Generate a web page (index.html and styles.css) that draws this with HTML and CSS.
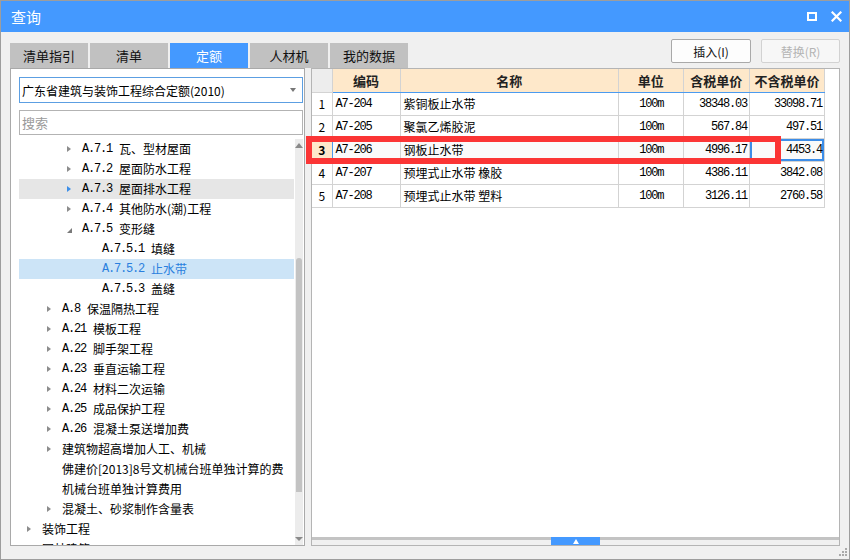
FILE: index.html
```html
<!DOCTYPE html>
<html lang="zh">
<head>
<meta charset="utf-8">
<title>查询</title>
<link rel="stylesheet" href="styles.css">
</head>
<body>
<div class="window">
  <div class="titlebar">
    <span class="title">查询</span>
    <div class="win-btns">
      <svg class="maxbtn" width="10" height="10" viewBox="0 0 10 10"><rect x="1" y="1" width="8" height="7" fill="none" stroke="#fff" stroke-width="2"/></svg>
      <svg class="closebtn" width="11" height="11" viewBox="0 0 11 11"><path d="M1.5 1.5 L9.5 9.5 M9.5 1.5 L1.5 9.5" stroke="#fff" stroke-width="2.2" stroke-linecap="square"/></svg>
    </div>
  </div>

  <div class="toolbar">
    <div class="tabs">
      <div class="tab">清单指引</div>
      <div class="tab">清单</div>
      <div class="tab active">定额</div>
      <div class="tab">人材机</div>
      <div class="tab">我的数据</div>
    </div>
    <div class="actions">
      <button class="btn">插入(I)</button>
      <button class="btn disabled">替换(R)</button>
    </div>
  </div>

  <div class="main">
    <div class="left">
      <div class="combo"><span>广东省建筑与装饰工程综合定额(2010)</span><span class="combo-arrow"></span></div>
      <div class="search">搜索</div>
      <div class="tree">
        <div class="tree-body">
          <div class="node l2"><span class="arr"></span><span class="code">A.7.1</span>瓦、型材屋面</div>
          <div class="node l2"><span class="arr"></span><span class="code">A.7.2</span>屋面防水工程</div>
          <div class="node l2 hover"><span class="arr"></span><span class="code">A.7.3</span>屋面排水工程</div>
          <div class="node l2"><span class="arr"></span><span class="code">A.7.4</span>其他防水(潮)工程</div>
          <div class="node l2"><span class="arr open"></span><span class="code">A.7.5</span>变形缝</div>
          <div class="node l3"><span class="arr none"></span><span class="code">A.7.5.1</span>填缝</div>
          <div class="node l3 selected"><span class="arr none"></span><span class="code">A.7.5.2</span>止水带</div>
          <div class="node l3"><span class="arr none"></span><span class="code">A.7.5.3</span>盖缝</div>
          <div class="node l1"><span class="arr"></span><span class="code">A.8</span>保温隔热工程</div>
          <div class="node l1"><span class="arr"></span><span class="code">A.21</span>模板工程</div>
          <div class="node l1"><span class="arr"></span><span class="code">A.22</span>脚手架工程</div>
          <div class="node l1"><span class="arr"></span><span class="code">A.23</span>垂直运输工程</div>
          <div class="node l1"><span class="arr"></span><span class="code">A.24</span>材料二次运输</div>
          <div class="node l1"><span class="arr"></span><span class="code">A.25</span>成品保护工程</div>
          <div class="node l1"><span class="arr"></span><span class="code">A.26</span>混凝土泵送增加费</div>
          <div class="node l1"><span class="arr"></span>建筑物超高增加人工、机械</div>
          <div class="node l1"><span class="arr none"></span>佛建价[2013]8号文机械台班单独计算的费</div>
          <div class="node l1"><span class="arr none"></span>机械台班单独计算费用</div>
          <div class="node l1"><span class="arr"></span>混凝土、砂浆制作含量表</div>
          <div class="node l0"><span class="arr"></span>装饰工程</div>
          <div class="node l0"><span class="arr"></span>园林建筑</div>
        </div>
        <div class="vscroll">
          <span class="sc-up"></span>
          <span class="sc-thumb"></span>
          <span class="sc-down"></span>
        </div>
      </div>
    </div>

    <div class="right">
      <div class="grid-area">
        <table class="grid">
          <colgroup>
            <col class="c-num"><col class="c-code"><col class="c-name"><col class="c-unit"><col class="c-p1"><col class="c-p2">
          </colgroup>
          <thead>
            <tr><th class="num"></th><th>编码</th><th>名称</th><th>单位</th><th>含税单价</th><th>不含税单价</th></tr>
          </thead>
          <tbody>
            <tr><td class="num">1</td><td class="mono">A7-204</td><td>紫铜板止水带</td><td class="unit mono">100m</td><td class="price mono">38348.03</td><td class="price mono">33098.71</td></tr>
            <tr><td class="num">2</td><td class="mono">A7-205</td><td>聚氯乙烯胶泥</td><td class="unit mono">100m</td><td class="price mono">567.84</td><td class="price mono">497.51</td></tr>
            <tr class="cur"><td class="num">3</td><td class="mono">A7-206</td><td>钢板止水带</td><td class="unit mono">100m</td><td class="price mono">4996.17</td><td class="price mono focus">4453.4</td></tr>
            <tr><td class="num">4</td><td class="mono">A7-207</td><td>预埋式止水带 橡胶</td><td class="unit mono">100m</td><td class="price mono">4386.11</td><td class="price mono">3842.08</td></tr>
            <tr><td class="num">5</td><td class="mono">A7-208</td><td>预埋式止水带 塑料</td><td class="unit mono">100m</td><td class="price mono">3126.11</td><td class="price mono">2760.58</td></tr>
          </tbody>
        </table>
      </div>
      <div class="splitter"><span class="handle"></span></div>
    </div>
  </div>

  <div class="statusbar">
    <svg class="grip" width="9" height="9" viewBox="0 0 9 9"><g fill="#a9a9a9"><rect x="6" y="0" width="2" height="2"/><rect x="3" y="3" width="2" height="2"/><rect x="6" y="3" width="2" height="2"/><rect x="0" y="6" width="2" height="2"/><rect x="3" y="6" width="2" height="2"/><rect x="6" y="6" width="2" height="2"/></g></svg>
  </div>

  <div class="mark"></div>
</div>
</body>
</html>
```

FILE: styles.css
```css
* { box-sizing: border-box; }
html, body { margin: 0; padding: 0; background: #f0f0f0; }

.window {
  position: relative;
  width: 850px;
  height: 560px;
  border: 1px solid #9d9d9d;
  background: #f0f0f0;
  display: flex;
  flex-direction: column;
  font-family: "Noto Sans CJK SC", "DejaVu Sans", sans-serif;
  color: #000;
  overflow: hidden;
}

/* title bar */
.titlebar {
  flex: none;
  height: 31px;
  background: #4499ff;
  color: #fff;
  display: flex;
  align-items: center;
  padding: 0 7px 0 10px;
}
.title { font-size: 15px; line-height: 1; }
.win-btns { margin-left: auto; display: flex; align-items: center; gap: 14px; }
.maxbtn { display: block; }
.closebtn { display: block; }

/* toolbar */
.toolbar {
  flex: none;
  height: 36px;
  display: flex;
  padding: 0 9px;
}
.tabs { display: flex; gap: 2px; align-self: flex-end; }
.tab {
  width: 78px;
  height: 25px;
  line-height: 25px;
  background: #c1c1c1;
  font-size: 13px;
  text-align: center;
  color: #111;
}
.tab.active { background: #4499ff; color: #fff; }
.actions { margin-left: auto; display: flex; gap: 10px; padding-top: 7px; align-items: flex-start; }
.btn {
  width: 80px;
  height: 24px;
  border: 1px solid #a9a9a9;
  border-radius: 2px;
  background: #fdfdfd;
  font-family: "Noto Sans CJK SC", sans-serif;
  font-size: 12px;
  color: #111;
  padding: 0;
}
.btn.disabled { width: 79px; color: #b4b4b4; border-color: #d2d2d2; background: #f7f7f7; }

/* main */
.main {
  flex: none;
  height: 478px;
  display: flex;
  gap: 6px;
  padding: 0 9px;
}

.left {
  width: 295px;
  border: 1px solid #a9a9a9;
  background: #fff;
  padding: 8px 1px 0 8px;
  display: flex;
  flex-direction: column;
}
.combo {
  flex: none;
  height: 26px;
  border: 1px solid #5c9fe2;
  display: flex;
  align-items: center;
  padding: 0 6px 0 2px;
  font-size: 12px;
  white-space: nowrap;
}
.combo-arrow {
  margin-left: auto;
  width: 0; height: 0;
  border-left: 3px solid transparent;
  border-right: 3px solid transparent;
  border-top: 4px solid #777;
}
.search {
  flex: none;
  margin-top: 7px;
  height: 25px;
  border: 1px solid #b3b3b3;
  font-size: 13px;
  color: #9a9a9a;
  line-height: 23px;
  padding-left: 2px;
}
.tree {
  flex: 1;
  margin-top: 4px;
  display: flex;
  overflow: hidden;
  min-height: 0;
}
.tree-body { flex: 1; overflow: hidden; }
.node {
  height: 20px;
  line-height: 20px;
  font-size: 12px;
  white-space: nowrap;
  display: flex;
  align-items: center;
  margin-right: 1px;
}
.node.l0 { padding-left: 8px; }
.node.l1 { padding-left: 28px; }
.node.l2 { padding-left: 48px; }
.node.l3 { padding-left: 68px; }
.arr {
  flex: none;
  width: 0; height: 0;
  border-left: 4px solid #8c8c8c;
  border-top: 3.5px solid transparent;
  border-bottom: 3.5px solid transparent;
  margin-right: 11px;
}
.arr.open {
  border-left: 5px solid transparent;
  border-bottom: 5px solid #7a7a7a;
  border-top: 0;
  margin-right: 10px;
  margin-top: 2px;
}
.arr.none { visibility: hidden; }
.code {
  font-family: "Liberation Mono", "DejaVu Sans Mono", monospace;
  letter-spacing: -1.2px;
  margin-right: 7px;
}
.node.hover { background: #e6e6e6; }
.node.hover .arr { border-left-color: #3d8fe8; }
.node.selected { background: #cce4f7; color: #2a7fde; }

.vscroll {
  flex: none;
  width: 8px;
  background: #ececec;
  position: relative;
  display: flex;
  flex-direction: column;
  align-items: center;
}
.sc-up {
  margin-top: 4px;
  width: 0; height: 0;
  border-left: 4px solid transparent;
  border-right: 4px solid transparent;
  border-bottom: 5px solid #8a8a8a;
}
.sc-thumb {
  margin-top: 110px;
  width: 6px;
  height: 234px;
  background: #c3c3c3;
  border-radius: 3px 3px 0 0;
}
.sc-down {
  margin-top: auto;
  margin-bottom: 4px;
  width: 0; height: 0;
  border-left: 4px solid transparent;
  border-right: 4px solid transparent;
  border-top: 4px solid #8a8a8a;
}

.right {
  flex: 1;
  border: 1px solid #b4b4b4;
  background: #fff;
  display: flex;
  flex-direction: column;
}
.grid-area { flex: 1; overflow: hidden; }
.grid {
  border-collapse: collapse;
  table-layout: fixed;
  width: 513px;
  font-size: 12px;
}
.c-num { width: 20px; }
.c-code { width: 68px; }
.c-name { width: 218px; }
.c-unit { width: 65px; }
.c-p1 { width: 66px; }
.c-p2 { width: 75px; }
.grid tr { height: 23px; }
.grid th, .grid td {
  border: 1px solid #d3d3d3;
  padding: 0 3px;
  white-space: nowrap;
  overflow: hidden;
}
.grid th {
  border-top: none;
  background: #fee8ca;
  font-size: 13px;
  font-weight: bold;
  text-align: center;
  border-bottom: 1px solid #4b9bf0;
  color: #222;
}
.grid th.num { background: #ededed; border-bottom-color: #d3d3d3; }
.grid .num { border-left: none; text-align: center; padding: 0; }
.grid td { padding: 0 2px 0 3px; }
.mono {
  font-family: "Liberation Mono", "DejaVu Sans Mono", monospace;
  letter-spacing: -1.2px;
}
.unit { text-align: center; }
.price { text-align: right; }
.grid tr.cur td { background: #fafafa; }
.grid tr.cur td.num { background: #fee8ca; font-weight: bold; border-right-color: #4b9bf0; }
.grid td.focus { box-shadow: inset 0 0 0 2px #3c8de8; background: #fff; }

.splitter {
  flex: none;
  height: 8px;
  background: linear-gradient(#c3c3c3 0, #c3c3c3 3px, #f0f0f0 3px);
  display: flex;
  justify-content: center;
}
.handle {
  width: 49px;
  height: 8px;
  background: #4499ff;
  display: flex;
  justify-content: center;
  align-items: center;
}
.handle::before {
  content: "";
  width: 0; height: 0;
  border-left: 3px solid transparent;
  border-right: 3px solid transparent;
  border-bottom: 5px solid #fff;
}

.statusbar {
  flex: none;
  height: 13px;
  display: flex;
  justify-content: flex-end;
  align-items: flex-end;
  padding: 0 1px 2px 0;
}
.grip { display: block; }

/* annotation overlay */
.mark {
  position: absolute;
  left: 305px;
  top: 135px;
  width: 475px;
  height: 28px;
  border: 6px solid #fb3535;
  pointer-events: none;
}
```
